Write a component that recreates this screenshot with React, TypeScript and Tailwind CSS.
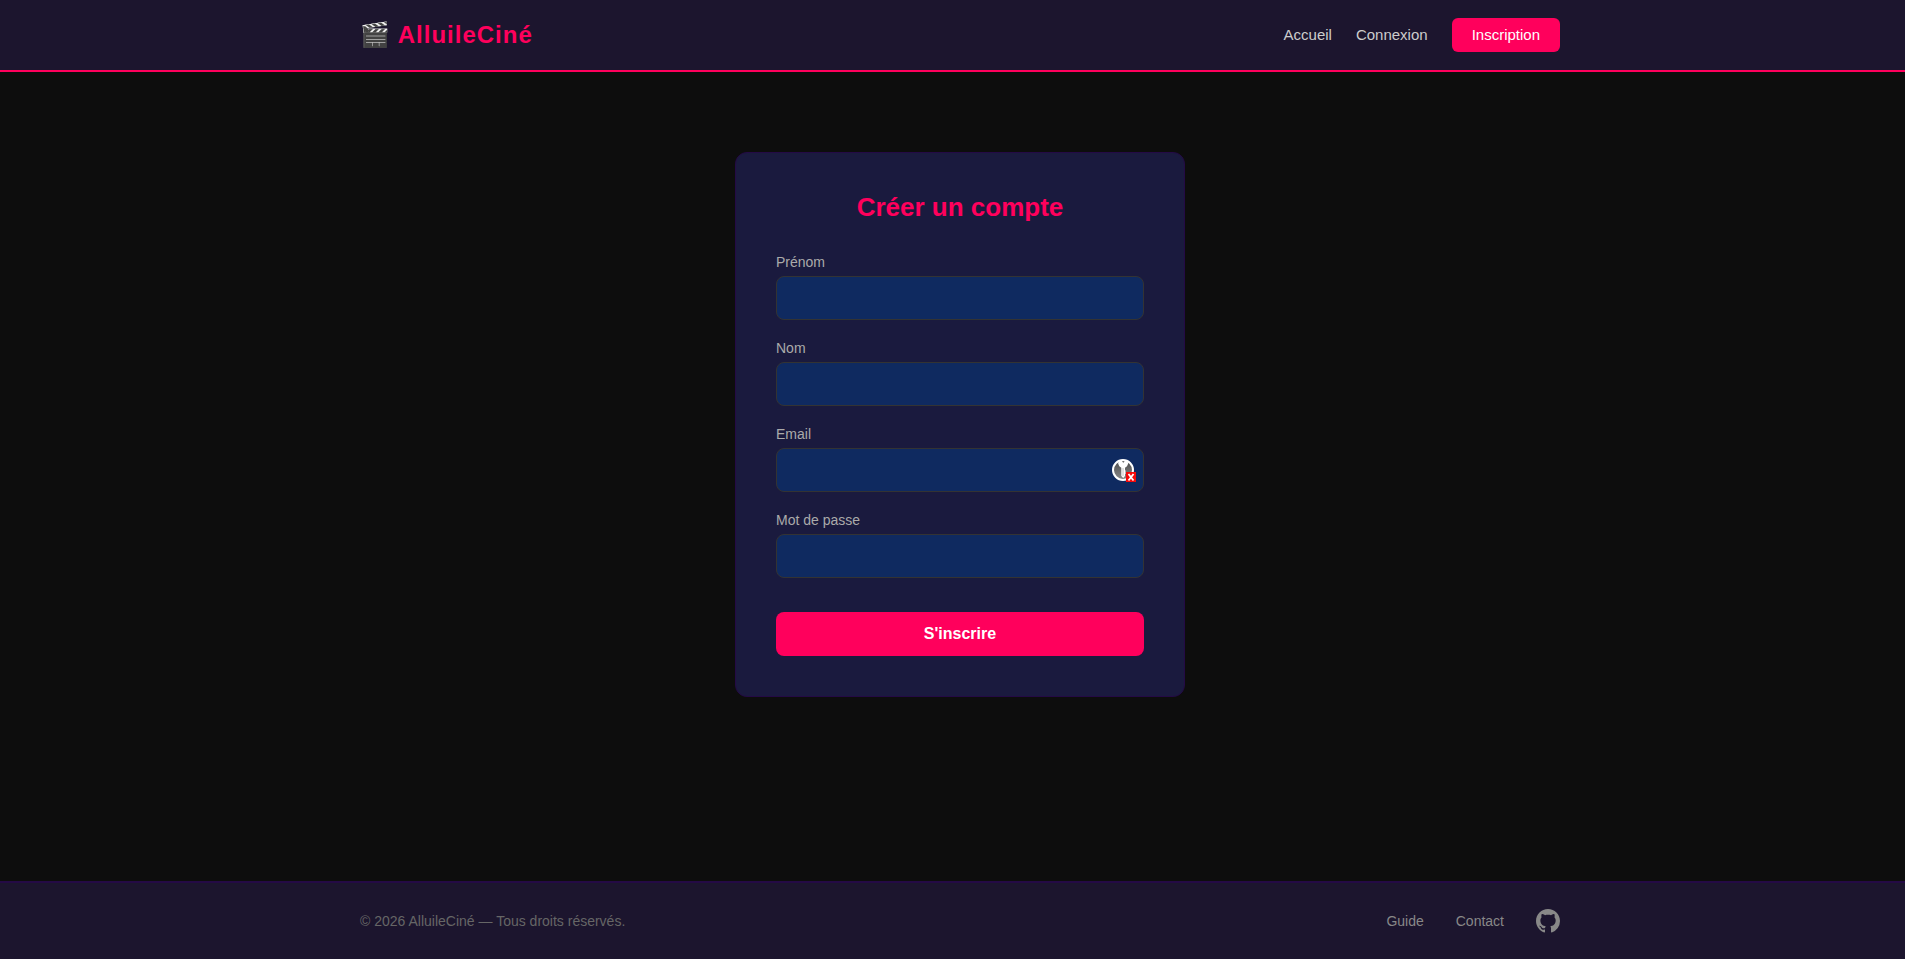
import { useState } from 'react'
import type { FormEvent } from 'react'

interface Field {
  id: string
  label: string
  type: string
}

const fields: Field[] = [
  { id: 'prenom', label: 'Prénom', type: 'text' },
  { id: 'nom', label: 'Nom', type: 'text' },
  { id: 'email', label: 'Email', type: 'email' },
  { id: 'password', label: 'Mot de passe', type: 'password' },
]

function KeyBadge() {
  return (
    <svg width="24" height="24" viewBox="0 0 24 24" aria-hidden="true">
      <defs>
        <linearGradient id="keyDisc" x1="0" y1="0" x2="0" y2="1">
          <stop offset="0" stopColor="#4a4a4a" />
          <stop offset="1" stopColor="#8a8a8a" />
        </linearGradient>
      </defs>
      <circle cx="11" cy="12" r="10" fill="url(#keyDisc)" stroke="#fff" strokeWidth="2" />
      {/* key */}
      <path d="M7 3h8.5l.7 2.5-1.2 2.7-2 1.6v2.4l1 .8-1 1 1 1-1 1v2l-1.8 2-1.9-2V9.8l-2-1.6-1.2-2.7z" fill="#fff" />
      <path d="M10 3.2h2.600l-1.300 1.600z" fill="#444" />
      <path d="M11 10v8" stroke="#b5b5b5" strokeWidth="0.8" />
      {/* badge */}
      <rect x="14" y="14" width="10" height="10" fill="#f50a0a" />
      <path d="M16.500 16l5 6.500M21.500 16l-5 6.500" stroke="#fff" strokeWidth="1.8" />
    </svg>
  )
}

function GithubIcon() {
  return (
    <svg width="24" height="24" viewBox="0 0 24 24" fill="currentColor" aria-hidden="true">
      <path d="M12 0C5.37 0 0 5.37 0 12c0 5.31 3.435 9.795 8.205 11.385.6.105.825-.255.825-.57 0-.285-.015-1.230-.015-2.235-3.015.555-3.795-.735-4.035-1.410-.135-.345-.720-1.410-1.230-1.695-.420-.225-1.020-.780-.015-.795.945-.015 1.620.870 1.845 1.230 1.080 1.815 2.805 1.305 3.495.990.105-.780.420-1.305.765-1.605-2.670-.300-5.460-1.335-5.460-5.925 0-1.305.465-2.385 1.230-3.225-.120-.300-.540-1.530.120-3.180 0 0 1.005-.315 3.300 1.230.960-.270 1.980-.405 3-.405s2.040.135 3 .405c2.295-1.560 3.300-1.230 3.300-1.230.660 1.650.240 2.880.120 3.180.765.840 1.230 1.905 1.230 3.225 0 4.605-2.805 5.625-5.475 5.925.435.375.810 1.095.810 2.220 0 1.605-.015 2.895-.015 3.300 0 .315.225.690.825.570A12.020 12.020 0 0 0 24 12c0-6.630-5.370-12-12-12z" />
    </svg>
  )
}

function Navbar() {
  return (
    <nav className="bg-[#1c152e] border-b-2 border-[#ff005c] pl-[15px]">
      <div className="max-w-[1200px] mx-auto h-[70px] flex items-center justify-between">
        <a href="#" className="text-2xl font-bold tracking-[1px] text-[#ff005c]">
          🎬 AlluileCiné
        </a>
        <div className="flex items-center gap-6 text-[15px] text-[#cccccc]">
          <a href="#">Accueil</a>
          <a href="#">Connexion</a>
          <a href="#" className="bg-[#ff005c] text-white rounded-md px-5 h-[34px] flex items-center">
            Inscription
          </a>
        </div>
      </div>
    </nav>
  )
}

function RegisterForm() {
  const [values, setValues] = useState<Record<string, string>>({})

  const handleSubmit = (e: FormEvent) => {
    e.preventDefault()
  }

  return (
    <form
      onSubmit={handleSubmit}
      className="w-full max-w-[450px] bg-[#1a1a3e] border border-[#240a45] rounded-xl p-10"
    >
      <h1 className="text-[26px] leading-[29px] font-bold text-center text-[#ff005c] mb-8">Créer un compte</h1>
      {fields.map(({ id, label, type }) => (
        <div key={id} className="mb-5">
          <label htmlFor={id} className="block text-sm leading-[16px] text-[#aaaaaa] mb-1.5">
            {label}
          </label>
          <div className="relative">
            <input
              id={id}
              type={type}
              value={values[id] ?? ''}
              onChange={(e) => setValues({ ...values, [id]: e.target.value })}
              className="block w-full h-11 px-4 rounded-lg bg-[#0f2a60] border border-[#333333] text-white outline-none focus:border-[#ff005c]"
            />
            {id === 'email' && (
              <span className="absolute right-2 inset-y-0 flex items-center">
                <KeyBadge />
              </span>
            )}
          </div>
        </div>
      ))}
      <button type="submit" className="w-full h-11 mt-3.5 rounded-lg bg-[#ff005c] text-white text-base font-bold">
        S'inscrire
      </button>
    </form>
  )
}

function Footer() {
  return (
    <footer className="bg-[#1c152e] border-t-2 border-[#240a45] pl-[15px]">
      <div className="max-w-[1200px] mx-auto py-[26px] flex items-center justify-between text-sm">
        <p className="text-[#666666]">© 2026 AlluileCiné — Tous droits réservés.</p>
        <div className="flex items-center gap-8 text-[#888888]">
          <a href="#">Guide</a>
          <a href="#">Contact</a>
          <a href="#" aria-label="GitHub">
            <GithubIcon />
          </a>
        </div>
      </div>
    </footer>
  )
}

export default function App() {
  return (
    <div className="min-h-screen flex flex-col bg-[#0d0d0d] font-['Liberation_Sans',Arial,sans-serif]">
      <Navbar />
      <main className="flex-1 flex items-start justify-center pl-[15px] py-20">
        <RegisterForm />
      </main>
      <Footer />
    </div>
  )
}
